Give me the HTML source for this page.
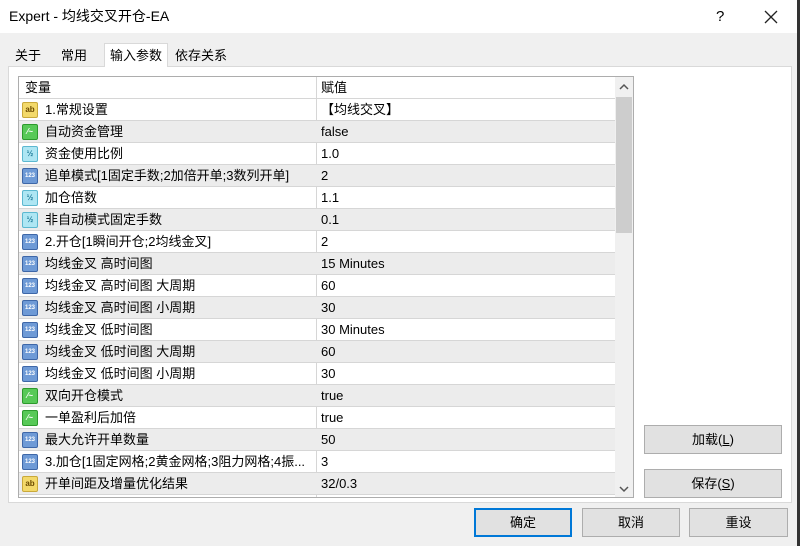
<!DOCTYPE html>
<html><head><meta charset="utf-8"><style>
*{margin:0;padding:0;box-sizing:border-box}
body{width:800px;height:546px;background:#f0f0f0;font-family:"Liberation Sans","Noto Sans CJK SC",sans-serif;font-size:13px;color:#000;position:relative;overflow:hidden}
.title{position:absolute;left:0;top:0;width:797px;height:33px;background:#fff;}
.title span{position:absolute;left:9px;top:0;line-height:33px;font-size:14px}
.rb{position:absolute;right:0;top:0;width:3px;height:546px;background:#333}
.tab{position:absolute;top:45px;height:22px;font-size:13px;padding:0 5px;line-height:22px}
.panel{position:absolute;left:8px;top:66px;width:784px;height:437px;background:#fff;border:1px solid #d9d9d9}
.table{position:absolute;left:18px;top:76px;width:616px;height:422px;border:1px solid #adadad;background:#fff;overflow:hidden}
.row{position:absolute;left:0;width:596px;height:22px;border-bottom:1px solid #d6d6d6;line-height:21px}
.row.g{background:#ececec}
.c1{position:absolute;left:26px;top:0;white-space:nowrap}
.c2{position:absolute;left:302px;top:0;white-space:nowrap}
.hd .c1{left:6px}
.vl{position:absolute;left:297px;top:0;width:1px;height:422px;background:#d6d6d6}
.ic{position:absolute;left:3px;top:3px;width:16px;height:16px;border-radius:2px;font-size:8px;font-weight:bold;text-align:center;line-height:14px}
.ab{background:#f3d96a;border:1px solid #c9a93a;color:#6b4a00}
.bo{background:#57c957;border:1px solid #2c9a2c;color:#fff}
.hf{background:#aee6f3;border:1px solid #5cb8d0;color:#1f7b99}
.nm{background:#6e9ad6;border:1px solid #3e67a8;color:#fff;font-size:6px}
.sb{position:absolute;left:596px;top:0;width:18px;height:420px;background:#f0f0f0}
.th{position:absolute;left:1px;top:20px;width:16px;height:136px;background:#cdcdcd}
.btn{position:absolute;height:29px;background:#e1e1e1;border:1px solid #adadad;text-align:center;line-height:27px;font-size:13px}
</style></head><body>
<div class="title"><span>Expert - 均线交叉开仓-EA</span>
<span style="left:716px;font-size:15px">?</span>
<svg style="position:absolute;left:764px;top:10px" width="14" height="14"><path d="M1 1L13 13M13 1L1 13" stroke="#222" stroke-width="1.3"/></svg></div>
<div class="rb"></div>
<div class="panel"></div>
<div class="tab" style="left:10px">关于</div>
<div class="tab" style="left:56px">常用</div>
<div class="tab" style="left:104px;top:43px;height:24px;line-height:24px;background:#fff;border:1px solid #d9d9d9;border-bottom:none">输入参数</div>
<div class="tab" style="left:170px">依存关系</div>
<div class="table">
<div class="vl"></div>
<div class="row hd" style="top:0"><span class="c1">变量</span><span class="c2">赋值</span></div>
<div class="row" style="top:22px"><div class="ic ab">ab</div><span class="c1">1.常规设置</span><span class="c2">【均线交叉】</span></div>
<div class="row g" style="top:44px"><div class="ic bo">⁄~</div><span class="c1">自动资金管理</span><span class="c2">false</span></div>
<div class="row" style="top:66px"><div class="ic hf">½</div><span class="c1">资金使用比例</span><span class="c2">1.0</span></div>
<div class="row g" style="top:88px"><div class="ic nm">123</div><span class="c1">追单模式[1固定手数;2加倍开单;3数列开单]</span><span class="c2">2</span></div>
<div class="row" style="top:110px"><div class="ic hf">½</div><span class="c1">加仓倍数</span><span class="c2">1.1</span></div>
<div class="row g" style="top:132px"><div class="ic hf">½</div><span class="c1">非自动模式固定手数</span><span class="c2">0.1</span></div>
<div class="row" style="top:154px"><div class="ic nm">123</div><span class="c1">2.开仓[1瞬间开仓;2均线金叉]</span><span class="c2">2</span></div>
<div class="row g" style="top:176px"><div class="ic nm">123</div><span class="c1">均线金叉 高时间图</span><span class="c2">15 Minutes</span></div>
<div class="row" style="top:198px"><div class="ic nm">123</div><span class="c1">均线金叉 高时间图 大周期</span><span class="c2">60</span></div>
<div class="row g" style="top:220px"><div class="ic nm">123</div><span class="c1">均线金叉 高时间图 小周期</span><span class="c2">30</span></div>
<div class="row" style="top:242px"><div class="ic nm">123</div><span class="c1">均线金叉 低时间图</span><span class="c2">30 Minutes</span></div>
<div class="row g" style="top:264px"><div class="ic nm">123</div><span class="c1">均线金叉 低时间图 大周期</span><span class="c2">60</span></div>
<div class="row" style="top:286px"><div class="ic nm">123</div><span class="c1">均线金叉 低时间图 小周期</span><span class="c2">30</span></div>
<div class="row g" style="top:308px"><div class="ic bo">⁄~</div><span class="c1">双向开仓模式</span><span class="c2">true</span></div>
<div class="row" style="top:330px"><div class="ic bo">⁄~</div><span class="c1">一单盈利后加倍</span><span class="c2">true</span></div>
<div class="row g" style="top:352px"><div class="ic nm">123</div><span class="c1">最大允许开单数量</span><span class="c2">50</span></div>
<div class="row" style="top:374px"><div class="ic nm">123</div><span class="c1">3.加仓[1固定网格;2黄金网格;3阻力网格;4振...</span><span class="c2">3</span></div>
<div class="row g" style="top:396px"><div class="ic ab">ab</div><span class="c1">开单间距及增量优化结果</span><span class="c2">32/0.3</span></div>
<div class="sb"><div class="th"></div>
<svg style="position:absolute;left:4px;top:6px" width="10" height="8"><path d="M1 6L5 2L9 6" stroke="#555" fill="none" stroke-width="1.5"/></svg>
<svg style="position:absolute;left:4px;top:408px" width="10" height="8"><path d="M1 2L5 6L9 2" stroke="#555" fill="none" stroke-width="1.5"/></svg></div>
</div>
<div class="btn" style="left:644px;top:425px;width:138px">加载(<u>L</u>)</div>
<div class="btn" style="left:644px;top:469px;width:138px">保存(<u>S</u>)</div>
<div class="btn" style="left:474px;top:508px;width:98px;border:2px solid #0078d7;line-height:25px">确定</div>
<div class="btn" style="left:582px;top:508px;width:98px">取消</div>
<div class="btn" style="left:689px;top:508px;width:99px">重设</div>
</body></html>
